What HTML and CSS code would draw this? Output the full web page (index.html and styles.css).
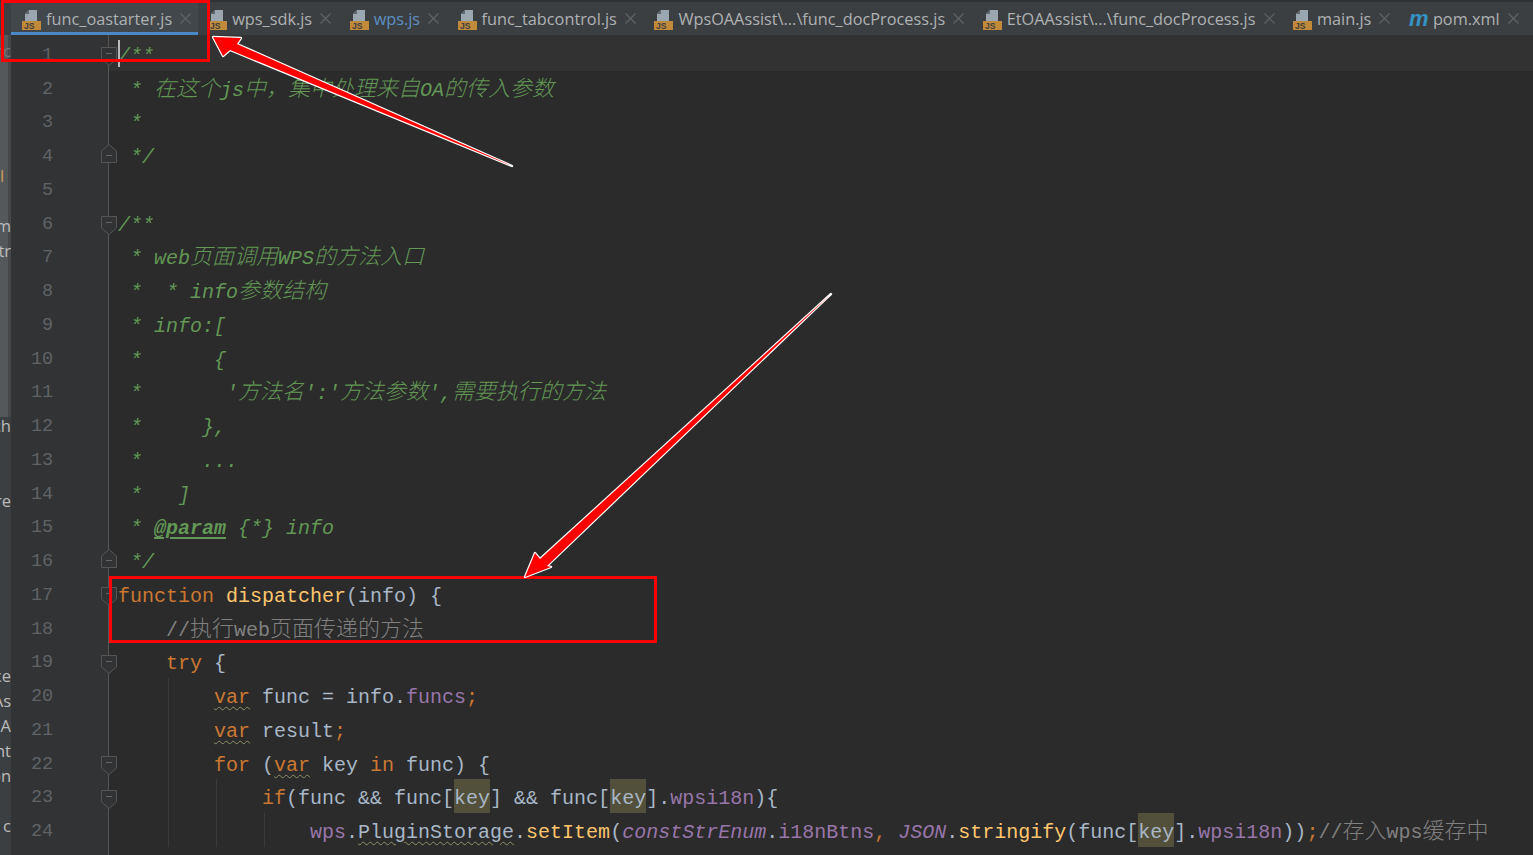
FILE: index.html
```html
<!DOCTYPE html>
<html lang="zh">
<head>
<meta charset="utf-8">
<title>func_oastarter.js</title>
<link rel="stylesheet" href="styles.css">
</head>
<body>
<svg class="defs" width="0" height="0" aria-hidden="true">
  <symbol id="js" viewBox="0 0 19 20">
    <path d="M3 11V4L7 0H15V11Z" fill="#9aa7b0"/>
    <path d="M3 4H7V0Z" fill="#5f676c"/>
    <rect x="0" y="11" width="19" height="9" fill="#c1893a"/>
    <text x="2" y="19" font-family="Liberation Sans" font-weight="700" font-size="8.5" fill="#3c3f41">JS</text>
  </symbol>
  <symbol id="close" viewBox="0 0 11 11">
    <path d="M.5.5 10.5 10.5M10.5.5.5 10.5" stroke="#5f6366" stroke-width="1.2" fill="none"/>
  </symbol>
  <symbol id="fold-open" viewBox="0 0 16 19">
    <path d="M.5.5H15.5V12L8 18.5.5 12Z" fill="#313335" stroke="#555"/>
    <path d="M5 6.5H11" stroke="#666"/>
  </symbol>
  <symbol id="fold-end" viewBox="0 0 16 19">
    <path d="M.5 18.5V7L8 .5 15.5 7V18.5Z" fill="#313335" stroke="#555"/>
    <path d="M5 11.5H11" stroke="#666"/>
  </symbol>
</svg>

<div class="app">
  <div class="tabs">
    <div class="tab active"><svg class="ico"><use href="#js"/></svg><span>func_oastarter.js</span><svg class="x"><use href="#close"/></svg></div>
    <div class="tab"><svg class="ico"><use href="#js"/></svg><span>wps_sdk.js</span><svg class="x"><use href="#close"/></svg></div>
    <div class="tab blue"><svg class="ico"><use href="#js"/></svg><span>wps.js</span><svg class="x"><use href="#close"/></svg></div>
    <div class="tab"><svg class="ico"><use href="#js"/></svg><span>func_tabcontrol.js</span><svg class="x"><use href="#close"/></svg></div>
    <div class="tab"><svg class="ico"><use href="#js"/></svg><span>WpsOAAssist\...\func_docProcess.js</span><svg class="x"><use href="#close"/></svg></div>
    <div class="tab"><svg class="ico"><use href="#js"/></svg><span>EtOAAssist\...\func_docProcess.js</span><svg class="x"><use href="#close"/></svg></div>
    <div class="tab"><svg class="ico"><use href="#js"/></svg><span>main.js</span><svg class="x"><use href="#close"/></svg></div>
    <div class="tab"><b class="mvn">m</b><span>pom.xml</span><svg class="x"><use href="#close"/></svg></div>
  </div>

  <div class="editor">
    <div class="strip">
      <div class="st dim">rc</div>
      <div class="st"></div><div class="st"></div><div class="st"></div><div class="st"></div>
      <div class="st or">l</div>
      <div class="st"></div>
      <div class="st">m</div>
      <div class="st">tr</div>
      <div class="st"></div><div class="st"></div><div class="st"></div><div class="st"></div><div class="st"></div><div class="st"></div>
      <div class="st">ch</div>
      <div class="st"></div><div class="st"></div>
      <div class="st">re</div>
      <div class="st"></div><div class="st"></div><div class="st"></div><div class="st"></div><div class="st"></div><div class="st"></div>
      <div class="st">ce</div>
      <div class="st">As</div>
      <div class="st">OA</div>
      <div class="st">nt</div>
      <div class="st">on</div>
      <div class="st"></div>
      <div class="st">c</div>
    </div>

    <div class="gutter">
      <div class="gl first"><span>1</span><svg class="fold open"><use href="#fold-open"/></svg></div>
      <div class="gl"><span>2</span></div>
      <div class="gl"><span>3</span></div>
      <div class="gl"><span>4</span><svg class="fold end"><use href="#fold-end"/></svg></div>
      <div class="gl"><span>5</span></div>
      <div class="gl"><span>6</span><svg class="fold open"><use href="#fold-open"/></svg></div>
      <div class="gl"><span>7</span></div>
      <div class="gl"><span>8</span></div>
      <div class="gl"><span>9</span></div>
      <div class="gl"><span>10</span></div>
      <div class="gl"><span>11</span></div>
      <div class="gl"><span>12</span></div>
      <div class="gl"><span>13</span></div>
      <div class="gl"><span>14</span></div>
      <div class="gl"><span>15</span></div>
      <div class="gl"><span>16</span><svg class="fold end"><use href="#fold-end"/></svg></div>
      <div class="gl"><span>17</span><svg class="fold open"><use href="#fold-open"/></svg></div>
      <div class="gl"><span>18</span></div>
      <div class="gl"><span>19</span><svg class="fold open"><use href="#fold-open"/></svg></div>
      <div class="gl"><span>20</span></div>
      <div class="gl"><span>21</span></div>
      <div class="gl"><span>22</span><svg class="fold open"><use href="#fold-open"/></svg></div>
      <div class="gl"><span>23</span><svg class="fold open"><use href="#fold-open"/></svg></div>
      <div class="gl"><span>24</span></div>
    </div>

    <div class="code">
<div class="ln first doc"><i class="caret"></i>/**</div>
<div class="ln doc"> * <span class="zh">在这个</span>js<span class="zh">中，集中处理来自</span>OA<span class="zh">的传入参数</span></div>
<div class="ln doc"> *</div>
<div class="ln doc"> */</div>
<div class="ln"></div>
<div class="ln doc">/**</div>
<div class="ln doc"> * web<span class="zh">页面调用</span>WPS<span class="zh">的方法入口</span></div>
<div class="ln doc"> *  * info<span class="zh">参数结构</span></div>
<div class="ln doc"> * info:[</div>
<div class="ln doc"> *      {</div>
<div class="ln doc"> *       '<span class="zh">方法名</span>':'<span class="zh">方法参数</span>',<span class="zh">需要执行的方法</span></div>
<div class="ln doc"> *     },</div>
<div class="ln doc"> *     ...</div>
<div class="ln doc"> *   ]</div>
<div class="ln doc"> * <span class="tag">@param</span> {*} info</div>
<div class="ln doc"> */</div>
<div class="ln"><span class="kw">function</span> <span class="fn">dispatcher</span>(info) {</div>
<div class="ln">    <span class="cm">//<span class="zh">执行</span>web<span class="zh">页面传递的方法</span></span></div>
<div class="ln">    <span class="kw">try</span> {</div>
<div class="ln g1">        <span class="kw warn">var</span> func = info.<span class="pr">funcs</span><span class="kw">;</span></div>
<div class="ln g1">        <span class="kw warn">var</span> result<span class="kw">;</span></div>
<div class="ln g1">        <span class="kw">for</span> (<span class="kw warn">var</span> key <span class="kw">in</span> func) {</div>
<div class="ln g2">            <span class="kw">if</span>(func &amp;&amp; func[<span class="hl">key</span>] &amp;&amp; func[<span class="hl">key</span>].<span class="pr">wpsi18n</span>){</div>
<div class="ln g3">                <span class="pr">wps</span>.<span class="warn">PluginStorage</span>.<span class="fn">setItem</span>(<span class="pr it">constStrEnum</span>.<span class="pr">i18nBtns</span><span class="kw">,</span> <span class="pr it">JSON</span>.<span class="fn">stringify</span>(func[<span class="hl">key</span>].<span class="pr">wpsi18n</span>))<span class="kw">;</span><span class="cm">//<span class="zh">存入</span>wps<span class="zh">缓存中</span></span></div>
    </div>
  </div>
</div>

<div class="mark mark-tab"></div>
<div class="mark mark-fn"></div>
<svg class="arrows" viewBox="0 0 1533 855" aria-hidden="true">
  <path class="arrow" d="M213 37 241 38 237 44 512 166 230 50 223 56Z"/>
  <path class="arrow" d="M525 577 535 553 540 559 831 294 547 566 551 567Z"/>
</svg>
</body>
</html>
```
FILE: styles.css
```css
* { box-sizing: border-box; }
html, body { margin: 0; height: 100%; overflow: hidden; background: #2b2b2b; }
.defs { position: absolute; }

.app { display: flex; flex-direction: column; width: 1533px; height: 855px; }

/* tab bar */
.tabs {
  display: flex;
  height: 35px;
  flex: none;
  padding-left: 11px;
  background: #3c3f41;
  border-top: 2px solid #2f3133;
  font-family: "Open Sans", sans-serif;
  font-size: 16.3px;
  color: #afb1b3;
}
.tab {
  display: flex;
  align-items: center;
  height: 33px;
  padding: 0 8px 0 10.5px;
  white-space: nowrap;
}
.tab.active { background: #41474a; padding: 0 6.5px 0 11px; box-shadow: inset 0 -3px 0 #4a88c7; }
.tab.blue { color: #5c8fc4; }
.ico { width: 19px; height: 20px; flex: none; margin-right: 5px; margin-top: 2px; }
.x { width: 11px; height: 11px; flex: none; margin-left: 8px; }
.mvn {
  width: 19px;
  margin-right: 5px;
  font: italic 700 22px/1 "Liberation Sans", sans-serif;
  color: #3592c4;
}

/* editor */
.editor { display: flex; flex: 1; min-height: 0; }

.strip {
  flex: none;
  width: 11px;
  padding-top: 2.5px;
  overflow: hidden;
  background:
    linear-gradient(#55585a, #55585a) 0 0 / 8px 382px no-repeat,
    linear-gradient(#44484a, #44484a) 8px 0 / 3px 382px no-repeat,
    #3c3f41;
  font: 16.5px/25px "Open Sans", sans-serif;
  color: #bbbbbb;
}
.st { display: flex; justify-content: flex-end; height: 25px; white-space: nowrap; }
.st.dim { color: #77797b; }
.st.or { color: #c8a05a; justify-content: flex-start; }

.gutter {
  flex: none;
  position: relative;
  z-index: 1;
  width: 98px;
  background: #313335;
  border-right: 1px solid #555555;
  font: 18.5px/33.75px "Liberation Mono", monospace;
  color: #606366;
}
.gl { display: flex; align-items: center; height: 33.75px; padding-left: 20px; }
.gl.first { height: 35.5px; padding-top: 1.75px; }
.gl span { width: 22px; padding-top: 4px; text-align: right; }
.fold { width: 16px; height: 19px; flex: none; margin-left: auto; margin-right: -8.5px; }
.fold.open { margin-top: 6px; }
.fold.end { margin-top: -2px; }

.code {
  flex: 1;
  min-width: 0;
  overflow: hidden;
  font: 20px/39.75px "Liberation Mono", monospace;
  color: #a9b7c6;
}
.ln { position: relative; height: 33.75px; padding-left: 9px; white-space: pre; }
.ln.first { height: 35.5px; padding-top: 1.75px; background: #323232; }
.caret { position: absolute; left: 9px; top: 5px; width: 2px; height: 27px; background: #bbbbbb; }

.doc { color: #629755; font-style: italic; }
.tag { font-weight: 700; text-decoration: underline; text-underline-offset: 3px; }
.zh { font-family: "Noto Sans CJK SC", sans-serif; font-size: 22px; font-weight: 300; line-height: 0; }
.kw { color: #cc7832; }
.fn { color: #ffc66d; }
.cm { color: #808080; }
.pr { color: #9876aa; }
.it { font-style: italic; }
.warn { text-decoration: underline wavy #8f8f6a 1px; text-underline-offset: 3px; }
.hl { display: inline-block; height: 33.75px; background: #52503a; }

.g1 { background: linear-gradient(#3b3b3b, #3b3b3b) 59px 0 / 1px 100% no-repeat; }
.g2 { background: linear-gradient(#3b3b3b, #3b3b3b) 59px 0 / 1px 100% no-repeat, linear-gradient(#3b3b3b, #3b3b3b) 107px 0 / 1px 100% no-repeat; }
.g3 { background: linear-gradient(#3b3b3b, #3b3b3b) 59px 0 / 1px 100% no-repeat, linear-gradient(#3b3b3b, #3b3b3b) 107px 0 / 1px 100% no-repeat, linear-gradient(#3b3b3b, #3b3b3b) 155px 0 / 1px 100% no-repeat; }

/* annotations drawn over the screenshot */
.mark { position: absolute; z-index: 2; border: 3px solid #ff0000; }
.mark-tab { left: 1px; top: 0; width: 209px; height: 62px; }
.mark-fn { left: 109px; top: 576px; width: 548px; height: 67px; }
.arrows { position: absolute; z-index: 3; left: 0; top: 0; width: 1533px; height: 855px; pointer-events: none; }
.arrow { fill: #ff0000; stroke: #ffffff; stroke-width: 2.4; stroke-linejoin: round; paint-order: stroke; }
```
